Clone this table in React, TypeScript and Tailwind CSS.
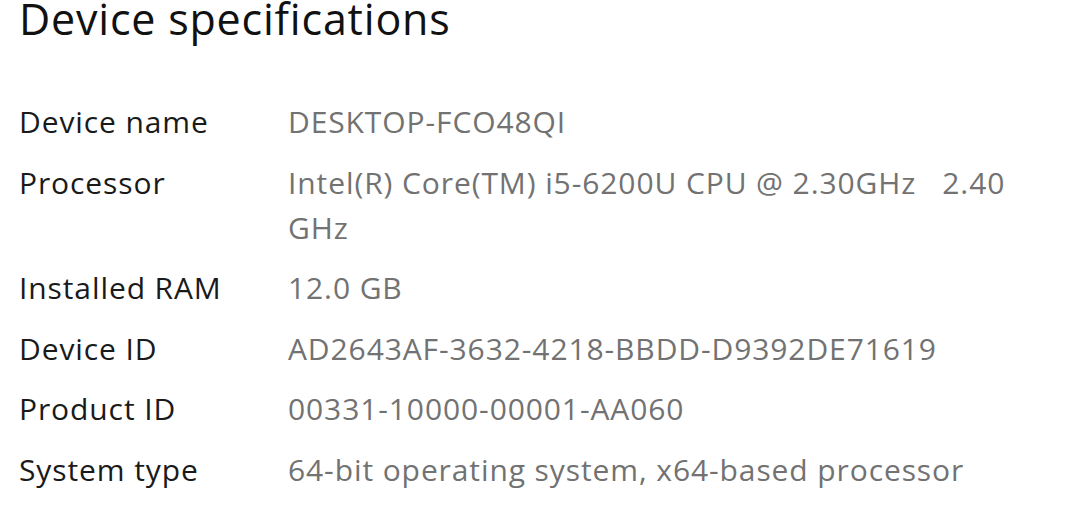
const SPECS: { label: string; value: React.ReactNode }[] = [
  { label: 'Device name', value: 'DESKTOP-FCO48QI' },
  {
    label: 'Processor',
    value: (
      <>
        Intel(R) Core(TM) i5-6200U CPU @ 2.30GHz&nbsp;&nbsp;&nbsp;2.40
        <br />
        GHz
      </>
    ),
  },
  { label: 'Installed RAM', value: '12.0 GB' },
  { label: 'Device ID', value: 'AD2643AF-3632-4218-BBDD-D9392DE71619' },
  { label: 'Product ID', value: '00331-10000-00001-AA060' },
  { label: 'System type', value: '64-bit operating system, x64-based processor' },
]

export default function App() {
  return (
    <div className="w-[1080px] h-[510px] overflow-hidden bg-white pl-[19px] pt-[4px] font-['Open_Sans',sans-serif]">
      <h1 className="text-[43px] leading-[30px] font-normal text-[#111] tracking-[0.8px]">
        Device specifications
      </h1>

      <div className="mt-[65px] flex flex-col gap-[15.6px]">
        {SPECS.map((s) => (
          <div key={s.label} className="flex text-[30px] leading-[45px] tracking-[0.9px]">
            <div className="w-[269px] shrink-0 text-[#1a1a1a]">{s.label}</div>
            <div className="text-[#727272] whitespace-nowrap">{s.value}</div>
          </div>
        ))}
      </div>
    </div>
  )
}
